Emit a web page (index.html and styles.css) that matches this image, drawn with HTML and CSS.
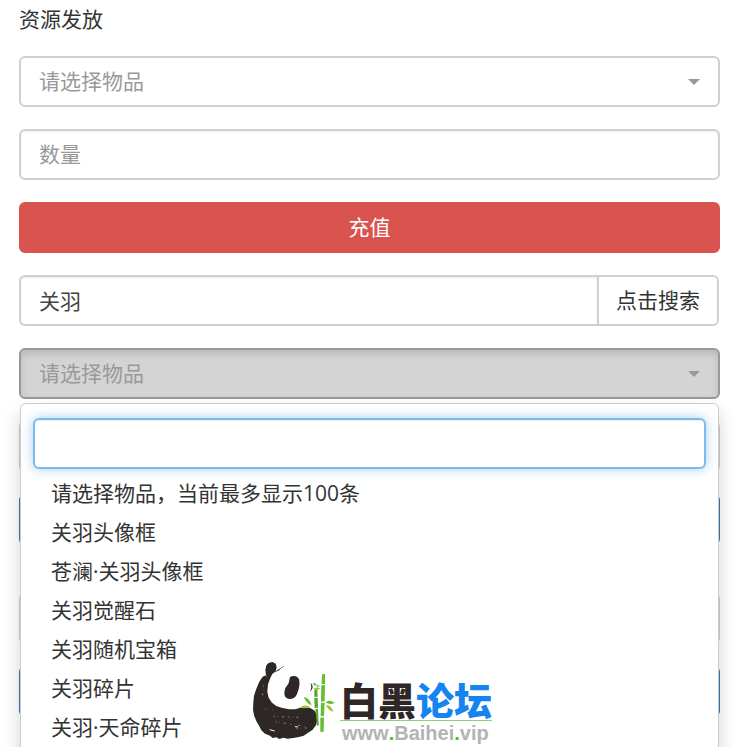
FILE: index.html
```
<!DOCTYPE html>
<html lang="zh-CN">

<head>
    <meta charset="utf-8">
    <meta name="viewport" content="width=device-width, initial-scale=1">
    <title>资源发放</title>
    <link rel="stylesheet" href="styles.css">
</head>

<body>
    <div class="page">
        <form class="form">
            <label class="title" for="item">资源发放</label>
            <div class="picker">
                <select id="item" class="control">
                    <option>请选择物品</option>
                </select>
            </div>
            <input type="text" class="control" placeholder="数量" aria-label="数量">
            <button type="button" class="btn btn-danger">充值</button>
            <div class="input-group">
                <input type="text" class="control" value="关羽" aria-label="物品名称">
                <button type="button" class="btn btn-default">点击搜索</button>
            </div>

            <div class="picker open">
                <select class="control" aria-label="请选择物品">
                    <option>请选择物品</option>
                </select>
                <!-- dropdown -->
                <div class="menu">
                    <div class="searchbox">
                        <input type="text" class="control" aria-label="搜索">
                    </div>
                    <ul class="items">
                        <li><a href="#">请选择物品，当前最多显示100条</a></li>
                        <li><a href="#">关羽头像框</a></li>
                        <li><a href="#">苍澜·关羽头像框</a></li>
                        <li><a href="#">关羽觉醒石</a></li>
                        <li><a href="#">关羽随机宝箱</a></li>
                        <li><a href="#">关羽碎片</a></li>
                        <li><a href="#">关羽·天命碎片</a></li>
                    </ul>
                </div>
            </div>

            <input type="text" class="control" aria-label="数量">
            <button type="button" class="btn btn-primary" aria-label="充值"></button>
            <input type="text" class="control next" aria-label="物品">
            <button type="button" class="btn btn-primary" aria-label="发送"></button>
        </form>

        <div class="watermark">
            <svg class="panda" viewBox="0 0 300 255" aria-hidden="true">
                <!-- body -->
                <path fill="#2f2626" d="M78 61 L76 45 L79 31 L87 23 L98 21 L107 26 L110 36 L107 49 L97 57 L91 69 L84 88 L82 110 L86 128 L96 143 L109 153 L127 159 L148 163 L166 163 L181 158 L198 157 L212 160 L224 167 L231 179 L232 196 L228 211 L217 225 L202 235 L191 242 L177 246 L160 249 L143 251 L130 248 L118 252 L109 247 L98 249 L90 242 L75 236 L64 226 L58 214 L50 200 L43 184 L39 165 L40 142 L42 122 L49 101 L58 80 L68 65 Z" />
                <path stroke="#2f2626" stroke-width="2" fill="none" d="M105 51 L131 34 M110 48 L120 44" />
                <!-- eye -->
                <path fill="#2f2626" d="M150 66 C160 60 173 62 177 73 C181 88 176 106 170 119 C164 131 151 135 141 130 C131 125 132 111 136 100 C140 91 146 88 147 80 Z" />
                <path fill="#2f2626" d="M211 84 C220 90 221 101 210 110 C214 101 216 93 211 84 Z" />
                <!-- scratches -->
                <path stroke="#d8d4d4" stroke-width="2" fill="none" stroke-dasharray="3 9 1 12 5 14" d="M79 62 L88 68 M71 91 L67 124 M76 163 L86 157 L98 165 M101 184 L176 187 M107 201 L195 214 M170 221 L208 218" />
                <path stroke="#fff" stroke-width="3" fill="none" d="M89 224 L104 228 M165 215 L174 216" />
                <!-- bamboo -->
                <path fill="#55a52f" d="M223 104 L232 102 L233 125 L223 126 Z M223 129 L233 128 L234 158 L224 159 Z M226 162 L234 161 L236 211 L231 213 Z" />
                <path fill="#65bd35" d="M246 58 L255 57 L255 87 L245 88 Z M244 91 L255 90 L254 139 L243 140 Z M243 144 L254 143 L252 183 L242 184 Z M241 188 L252 187 L251 230 L241 231 Z" />
                <path fill="#65bd35" d="M191 126 Q209 128 215 151 Q199 146 191 126 Z M257 142 Q266 132 284 143 Q270 151 257 142 Z M218 84 Q229 82 232 95 Q222 94 218 84 Z M240 94 Q232 86 225 91 Q231 98 240 94 Z" />
                <path fill="#9cc52c" d="M258 149 Q275 151 280 170 Q263 165 258 149 Z M180 158 Q193 146 213 156 Q196 162 180 158 Z M220 102 Q232 94 241 101 Q230 107 220 102 Z" />
            </svg>
            <div class="brand">
                <div class="brand-name">白黑<span>论坛</span></div>
                <div class="brand-url">www<b>.</b>Baihei<b>.</b>vip</div>
            </div>
        </div>
    </div>
</body>

</html>
```
FILE: styles.css
```
* {
    box-sizing: border-box;
}

body {
    margin: 0;
    background-color: #fff;
    color: #333;
    font-family: "Open Sans", "Noto Sans CJK SC", sans-serif;
    font-size: 21px;
    line-height: 30px;
}

.page {
    position: relative;
    height: 100vh;
    overflow: hidden;
    padding: 4px 30px 0 19px;
}

.form {
    display: flex;
    flex-direction: column;
    gap: 22px;
}

.title {
    display: block;
}

/* Controls */
.control,
.btn {
    display: block;
    width: 100%;
    height: 51px;
    margin: 0;
    padding: 0 18px 2px;
    border: 2px solid #d0d0d0;
    border-radius: 6px;
    background-color: #fff;
    color: #444;
    font: inherit;
    outline: none;
}

input.control {
    box-shadow: inset 0 1px 2px rgba(0, 0, 0, 0.08);
}

.control::placeholder {
    color: #999;
    opacity: 1;
}

select.control {
    appearance: none;
    color: #999;
}

.btn {
    cursor: pointer;
    text-align: center;
}

.btn-danger {
    background-color: #d9534f;
    border-color: #d9534f;
    color: #fff;
}

.btn-primary {
    background-color: #337ab7;
    border-color: #337ab7;
}

.btn-default {
    width: auto;
    flex: none;
    padding: 0 17px 2px;
    border-radius: 0 6px 6px 0;
    color: #333;
}

.input-group {
    display: flex;
    padding-right: 1px;
}

.input-group .control {
    flex: 1;
    min-width: 0;
    border-right: 0;
    border-radius: 6px 0 0 6px;
}

.next {
    margin-top: 26px;
}

/* Select with caret */
.picker {
    position: relative;
}

.picker::after {
    content: "";
    position: absolute;
    top: 23px;
    right: 20px;
    border: 6px solid transparent;
    border-top-color: #999;
    border-bottom: 0;
    pointer-events: none;
}

.picker.open .control {
    color: #999;
}

.picker.open > select {
    background-color: #d4d4d4;
    border-color: #999;
    box-shadow: inset 0 4px 7px rgba(0, 0, 0, 0.125);
}

.menu {
    position: absolute;
    top: 100%;
    left: 1px;
    right: 1px;
    z-index: 10;
    margin-top: 4px;
    padding: 12px 0;
    border: 1px solid #ccc;
    border-radius: 6px;
    background-color: #fff;
    background-clip: padding-box;
    box-shadow: 0 9px 18px rgba(0, 0, 0, 0.175);
}

.searchbox {
    padding: 2px 12px 5px;
}

.searchbox .control {
    border-color: #7dbbec;
    box-shadow: inset 0 1px 1px rgba(0, 0, 0, 0.075), 0 0 12px rgba(102, 175, 233, 0.6);
}

.items {
    margin: 0;
    padding: 0;
    list-style: none;
}

.items a {
    display: block;
    padding: 0 30px;
    color: #333;
    line-height: 39px;
    text-decoration: none;
}

/* Watermark */
.watermark {
    position: absolute;
    left: 32%;
    bottom: 0;
    z-index: 20;
    display: flex;
    height: 92px;
    pointer-events: none;
}

.panda {
    width: 100px;
    height: 85px;
}

.brand {
    padding-top: 25px;
}

.brand-name {
    height: 41px;
    border-bottom: 1px solid #8fd07a;
    color: #2f2626;
    font-family: "Noto Sans CJK SC", sans-serif;
    font-size: 38px;
    font-weight: 900;
    line-height: 38px;
}

.brand-name span {
    color: #1583f0;
}

.brand-url {
    padding-left: 2px;
    color: #b3b3b3;
    font-family: "Liberation Sans", sans-serif;
    font-size: 20px;
    font-weight: bold;
    line-height: 24px;
}

.brand-url b {
    color: #5cb531;
}
```
